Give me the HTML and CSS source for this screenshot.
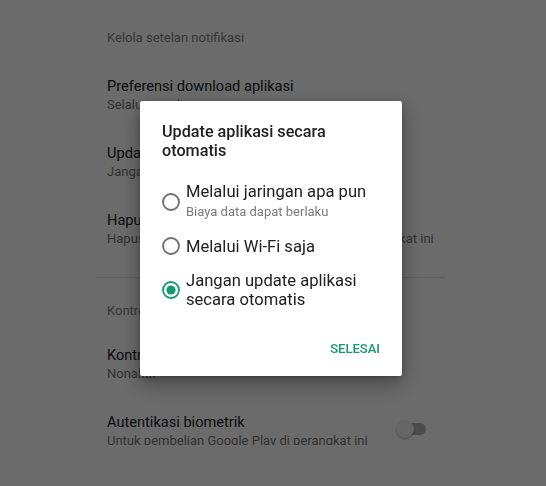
FILE: index.html
```html
<!DOCTYPE html>
<html lang="id">
<head>
<meta charset="utf-8">
<title>Setelan</title>
<link rel="stylesheet" href="styles.css">
</head>
<body>
<div class="screen">
  <div class="list">
    <p class="note">Kelola setelan notifikasi</p>
    <div class="item">
      <div class="item-text">
        <div class="item-title">Preferensi download aplikasi</div>
        <div class="item-sub">Selalu tanyakan</div>
      </div>
    </div>
    <div class="item">
      <div class="item-text">
        <div class="item-title">Update aplikasi otomatis</div>
        <div class="item-sub">Jangan update aplikasi otomatis</div>
      </div>
    </div>
    <div class="item">
      <div class="item-text">
        <div class="item-title">Hapus histori penelusuran</div>
        <div class="item-sub">Hapus penelusuran yang Anda lakukan dari perangkat ini</div>
      </div>
    </div>
    <hr class="divider">
    <p class="section">Kontrol pengguna</p>
    <div class="item">
      <div class="item-text">
        <div class="item-title">Kontrol orang tua</div>
        <div class="item-sub">Nonaktif</div>
      </div>
    </div>
    <div class="item">
      <div class="item-text">
        <div class="item-title">Autentikasi biometrik</div>
        <div class="item-sub">Untuk pembelian Google Play di perangkat ini</div>
      </div>
      <div class="switch"><span class="track"></span><span class="thumb"></span></div>
    </div>
  </div>
</div>

<div class="scrim">
  <div class="dialog" role="dialog">
    <h2 class="dialog-title">Update aplikasi secara otomatis</h2>
    <div class="options">
      <div class="option">
        <svg class="radio" width="18" height="18" viewBox="0 0 18 18"><circle cx="9" cy="9" r="8" fill="none" stroke="#6f6f6f" stroke-width="1.8"/></svg>
        <div class="option-text">
          <div class="option-label">Melalui jaringan apa pun</div>
          <div class="option-sub">Biaya data dapat berlaku</div>
        </div>
      </div>
      <div class="option">
        <svg class="radio" width="18" height="18" viewBox="0 0 18 18"><circle cx="9" cy="9" r="8" fill="none" stroke="#6f6f6f" stroke-width="1.8"/></svg>
        <div class="option-text">
          <div class="option-label">Melalui Wi-Fi saja</div>
        </div>
      </div>
      <div class="option">
        <svg class="radio" width="18" height="18" viewBox="0 0 18 18"><circle cx="9" cy="9" r="8" fill="none" stroke="#159a6c" stroke-width="1.8"/><circle cx="9" cy="9" r="4.6" fill="#159a6c"/></svg>
        <div class="option-text">
          <div class="option-label">Jangan update aplikasi secara otomatis</div>
        </div>
      </div>
    </div>
    <div class="actions">
      <span class="btn">SELESAI</span>
    </div>
  </div>
</div>
</body>
</html>
```
FILE: styles.css
```css
html, body {
  margin: 0;
  padding: 0;
  background: #ffffff;
  font-family: Roboto, "Noto Sans", "Liberation Sans", sans-serif;
}

.screen {
  width: 546px;
  height: 445px;
  overflow: hidden;
}

.list {
  margin-left: 96px;
  width: 349px;
  padding-top: 29px;
}

.note,
.section {
  margin: 0;
  padding-left: 11px;
  font-size: 13px;
  line-height: 18px;
  color: #858585;
}

.note {
  margin-bottom: 14px;
}

.section {
  margin-top: 24px;
  margin-bottom: 10px;
}

.item {
  display: flex;
  align-items: center;
  padding: 15px 19px 15px 11px;
}

.item-text {
  flex: 1;
  min-width: 0;
}

.item-title {
  font-size: 14.6px;
  line-height: 20px;
  color: #202124;
  white-space: nowrap;
}

.item-sub {
  font-size: 13px;
  line-height: 17px;
  color: #787878;
  white-space: nowrap;
}

.divider {
  margin: 15px 0 0;
  border: 0;
  height: 1px;
  background: #e6e6e6;
}

.switch {
  position: relative;
  width: 30px;
  height: 20px;
  margin-bottom: 4px;
  flex: none;
}

.track {
  position: absolute;
  left: 3px;
  top: 4px;
  width: 27px;
  height: 12px;
  border-radius: 6px;
  background: #b3b3b3;
}

.thumb {
  position: absolute;
  left: 0;
  top: 1px;
  width: 18px;
  height: 18px;
  border-radius: 50%;
  background: #f2f2f2;
  box-shadow: 0 1px 2px rgba(0, 0, 0, 0.3);
}

.scrim {
  position: fixed;
  inset: 0;
  background: rgba(0, 0, 0, 0.58);
  display: flex;
  justify-content: center;
  align-items: flex-start;
  padding: 101px 4px 0 0;
}

.dialog {
  width: 262px;
  box-sizing: border-box;
  padding: 21px 22px 19px 22px;
  background: #ffffff;
  border-radius: 2px;
  box-shadow: 0 8px 22px rgba(0, 0, 0, 0.35), 0 2px 6px rgba(0, 0, 0, 0.2);
}

.dialog-title {
  margin: 0;
  font-size: 16.2px;
  font-weight: 500;
  line-height: 19px;
  color: #212121;
}

.options {
  margin-top: 22px;
  display: flex;
  flex-direction: column;
  gap: 15.5px;
}

.option {
  display: flex;
  align-items: center;
  gap: 6px;
}

.radio {
  flex: none;
  display: block;
}

.option-label {
  font-size: 16.6px;
  line-height: 19px;
  color: #202020;
}

.option-sub {
  margin-top: 2px;
  font-size: 13px;
  line-height: 18px;
  color: #7a7a7a;
}

.actions {
  margin-top: 32px;
  display: flex;
  justify-content: flex-end;
}

.btn {
  font-size: 13px;
  font-weight: 500;
  line-height: 16px;
  color: #159a6c;
}
```
